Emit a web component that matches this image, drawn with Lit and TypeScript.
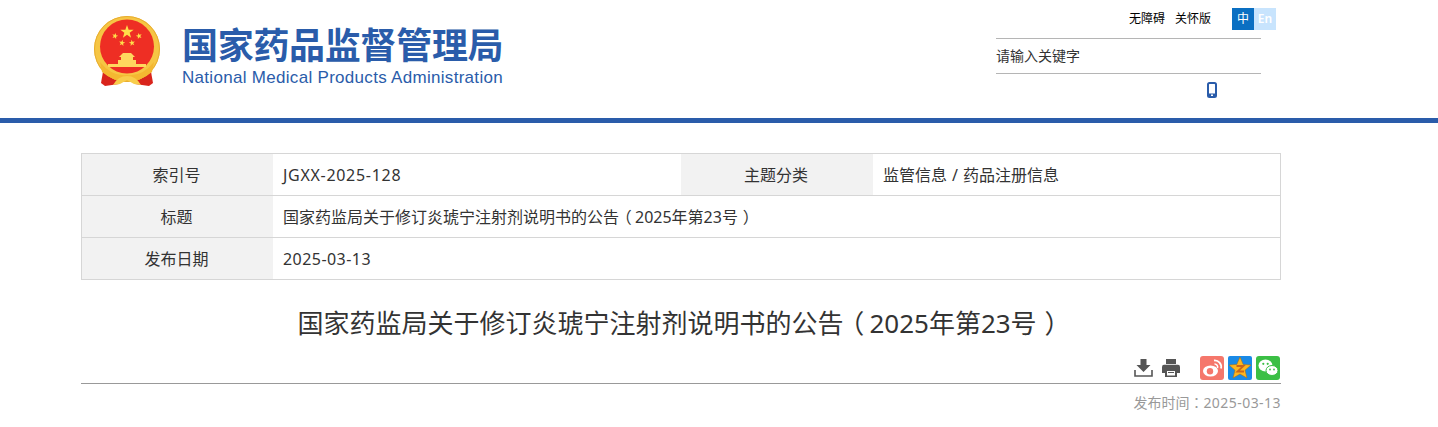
import { LitElement, html, css, svg } from "lit";
import { customElement } from "lit/decorators.js";

const star = (cx: number, cy: number, r: number, rot = 0) => {
  const pts: string[] = [];
  for (let i = 0; i < 10; i++) {
    const rad = i % 2 === 0 ? r : r * 0.4;
    const a = ((-90 + rot + i * 36) * Math.PI) / 180;
    pts.push(`${(cx + rad * Math.cos(a)).toFixed(2)},${(cy + rad * Math.sin(a)).toFixed(2)}`);
  }
  return svg`<polygon points=${pts.join(" ")} fill="#ffdf4a"/>`;
};

const titleText = html`国家药监局关于修订炎琥宁注射剂说明书的公告<span class="open">（</span>2025年第23号<span class="close">）</span>`;

@customElement("app-root")
export class AppRoot extends LitElement {
  static styles = css`
    :host {
      display: block;
      background: #fff;
      font-family: "Noto Sans", "Noto Sans CJK SC", sans-serif;
      color: #333;
      height: 427px;
      overflow: hidden;
    }
    .head {
      height: 118px;
      border-bottom: 5px solid #2a5caa;
      display: flex;
    }
    .head-in {
      margin-left: 92px;
      width: 1184px;
      display: flex;
      justify-content: space-between;
    }
    .brand {
      display: flex;
      padding-top: 15px;
      height: 72px;
    }
    .emblem {
      width: 70px;
      height: 72px;
      display: block;
    }
    .names {
      margin-left: 20px;
      display: flex;
      flex-direction: column;
      color: #2a5caa;
    }
    .cn {
      font-family: "Noto Sans CJK SC", sans-serif;
      font-size: 36px;
      font-weight: 700;
      line-height: 44px;
      margin-top: 6px;
      letter-spacing: -0.3px;
      white-space: nowrap;
    }
    .en {
      font-family: "Liberation Sans", Arial, sans-serif;
      font-size: 17px;
      line-height: 20px;
      margin-top: 3px;
      letter-spacing: 0.3px;
      white-space: nowrap;
    }
    .tools {
      width: 280px;
      display: flex;
      flex-direction: column;
    }
    .top {
      height: 22px;
      margin: 8px 0;
      display: flex;
      align-items: center;
      justify-content: flex-end;
      font-size: 12px;
      line-height: 20px;
      color: #000;
    }
    .top span.link {
      margin-right: 9px;
    }
    .top span.first {
      margin-right: 10px;
    }
    .lang {
      display: flex;
      margin-left: 12px;
    }
    .lang b {
      width: 22px;
      height: 22px;
      line-height: 22px;
      text-align: center;
      font-weight: 400;
      color: #fff;
      background: #0a6fc2;
    }
    .lang b.off {
      background: #c8e4fd;
      font-weight: 600;
    }
    .search {
      width: 265px;
      height: 34px;
      border-top: 1px solid #b5b5b5;
      border-bottom: 1px solid #b5b5b5;
      font-size: 14px;
      line-height: 33px;
      color: #333;
    }
    .phone {
      width: 265px;
      display: flex;
      justify-content: flex-end;
      padding-top: 8px;
      box-sizing: border-box;
      padding-right: 44px;
    }
    .phone svg {
      width: 10px;
      height: 16px;
      display: block;
    }
    .main {
      margin: 30px 0 0 81px;
      width: 1200px;
    }
    .tbl {
      display: grid;
      grid-template-columns: 191px 408px 192px 1fr;
      border: 1px solid #d6d6d6;
      border-bottom: 0;
      font-size: 16px;
      color: #333;
    }
    .tbl > div {
      box-sizing: border-box;
      height: 42px;
      line-height: 43px;
      border-bottom: 1px solid #d6d6d6;
    }
    .tbl .k {
      background: #f2f2f2;
      text-align: center;
      padding-right: 2px;
    }
    .tbl .v {
      padding-left: 10px;
      word-spacing: 0.85px;
    }
    .tbl .wide {
      grid-column: 2 / 5;
    }
    .tbl .code {
      letter-spacing: 0.7px;
    }
    .num {
      letter-spacing: 0.45px;
    }
    .colon {
      font-family: "Noto Sans CJK TC", sans-serif;
    }
    .open {
      font-feature-settings: "halt";
      margin-left: 0.3em;
      margin-right: 0.2em;
    }
    .close {
      font-feature-settings: "halt";
      margin-left: 0.3em;
      margin-right: 0.2em;
    }
    h1 {
      margin: 24px 0 0;
      padding-right: 2px;
      font-weight: 400;
      font-size: 26px;
      line-height: 38px;
      text-align: center;
      color: #333;
      white-space: nowrap;
    }
    .bar {
      margin-top: 14px;
      height: 27px;
      padding-right: 1px;
      border-bottom: 1px solid #999;
      display: flex;
      justify-content: flex-end;
      gap: 4px;
    }
    .bar svg {
      display: block;
      width: 24px;
      height: 24px;
    }
    .bar .plain {
      width: 20px;
      height: 20px;
      margin-top: 2px;
    }
    .bar .print {
      margin-left: 3px;
      margin-right: 15px;
    }
    .date {
      text-align: right;
      font-size: 14px;
      color: #999;
      line-height: 20px;
      margin-top: 8px;
    }
  `;

  render() {
    return html`
      <div class="head">
        <div class="head-in">
          <div class="brand">
            <svg class="emblem" viewBox="92 15 70 72">
              <path d="M104 66 L101 83 L105 86 L119 84 L116 70 Z" fill="#d9241c"/>
              <path d="M150 66 L153 83 L149 86 L135 84 L138 70 Z" fill="#d9241c"/>
              <circle cx="127" cy="49" r="33" fill="#f6c644"/>
              <circle cx="127" cy="49" r="32.5" fill="none" stroke="#e8ad30" stroke-width="1"/>
              <circle cx="127" cy="46.5" r="27" fill="#ee2e24"/>
              ${star(127, 32, 7)}${star(115, 36, 3.2, 15)}${star(139, 36, 3.2, -15)}${star(122, 43, 3.2, 10)}${star(132, 43, 3.2, -10)}
              <path d="M119 57 L123 53 H131 L135 57 H133 V60 H136 V64 H146 V67 H108 V64 H118 V60 H121 V57 Z" fill="#ffd75e"/>
              <path d="M100 62 Q112 77 127 75 Q142 77 154 62 L152 72 Q140 82 127 81 Q114 82 102 72 Z" fill="#f4b731"/>
              <path d="M113 85 Q118 76 127 76 Q136 76 141 85 L134 84 L127 80 L120 84 Z" fill="#f8cd4c"/>
            </svg>
            <div class="names">
              <div class="cn">国家药品监督管理局</div>
              <div class="en">National Medical Products Administration</div>
            </div>
          </div>
          <div class="tools">
            <div class="top">
              <span class="link first">无障碍</span><span class="link">关怀版</span>
              <div class="lang"><b>中</b><b class="off">En</b></div>
            </div>
            <div class="search">请输入关键字</div>
            <div class="phone">
              <svg viewBox="0 0 10 16"><rect x="1" y="1" width="8" height="14" rx="1.5" fill="none" stroke="#2a5caa" stroke-width="2"/><rect x="1" y="11.5" width="8" height="3.5" fill="#2a5caa"/><rect x="4" y="12.5" width="2" height="1.5" fill="#fff"/></svg>
            </div>
          </div>
        </div>
      </div>
      <div class="main">
        <div class="tbl">
          <div class="k">索引号</div><div class="v code">JGXX-2025-128</div>
          <div class="k">主题分类</div><div class="v">监管信息 / 药品注册信息</div>
          <div class="k">标题</div><div class="v wide">${titleText}</div>
          <div class="k">发布日期</div><div class="v wide num">2025-03-13</div>
        </div>
        <h1>${titleText}</h1>
        <div class="bar">
          <svg class="plain" viewBox="0 0 20 20"><path d="M6.5 1 H12.5 V7 H16.5 L9.5 14 L2.5 7 H6.5 Z" fill="#555"/><path d="M1 12 V18 H18 V12" fill="none" stroke="#555" stroke-width="1.6"/></svg>
          <svg class="plain print" viewBox="0 0 20 20"><path d="M5 1 H15 V6 H5 Z" fill="#555"/><path d="M1 9 Q1 6.8 3 6.8 H17 Q19 6.8 19 9 V15 H16 V11 H4 V15 H1 Z" fill="#555"/><rect x="4" y="11" width="12" height="8" fill="#555"/><rect x="6" y="13" width="8" height="4.5" fill="#fff"/><rect x="7" y="14" width="6" height="1" fill="#555"/></svg>
          <svg viewBox="0 0 24 24"><rect width="24" height="24" rx="3" fill="#f5776b"/><ellipse cx="10.5" cy="15" rx="7.5" ry="5.5" fill="#fff"/><circle cx="10" cy="15.3" r="3.2" fill="#f5776b"/><path d="M14 4.5 a6.5 6.5 0 0 1 7 8" fill="none" stroke="#fff" stroke-width="1.8"/><path d="M14.5 8 a3 3 0 0 1 3 4" fill="none" stroke="#fff" stroke-width="1.5"/></svg>
          <svg viewBox="0 0 24 24"><rect width="24" height="24" rx="2" fill="#1a8ae6"/><polygon points="12,1 15.2,8.4 23,9 17,14.2 19,22 12,18 5,22 7,14.2 1,9 8.8,8.4" fill="#fdb61f" stroke="#a86a10" stroke-width="0.5"/><path d="M8.5 10 H15.5 L9.5 15.5 H16" fill="none" stroke="#c9661a" stroke-width="1.8"/></svg>
          <svg viewBox="0 0 24 24"><rect width="24" height="24" rx="3" fill="#3bbf45"/><ellipse cx="9.5" cy="9.5" rx="7" ry="6" fill="#fff"/><ellipse cx="16" cy="14.5" rx="6" ry="5" fill="#fff" stroke="#3bbf45" stroke-width="1"/><circle cx="7.3" cy="7.8" r="1.1" fill="#3bbf45"/><circle cx="11.7" cy="7.8" r="1.1" fill="#3bbf45"/><circle cx="14" cy="13.5" r=".9" fill="#3bbf45"/><circle cx="18" cy="13.5" r=".9" fill="#3bbf45"/></svg>
        </div>
        <div class="date">发布时间<span class="colon">：</span><span class="num">2025-03-13</span></div>
      </div>
    `;
  }
}
